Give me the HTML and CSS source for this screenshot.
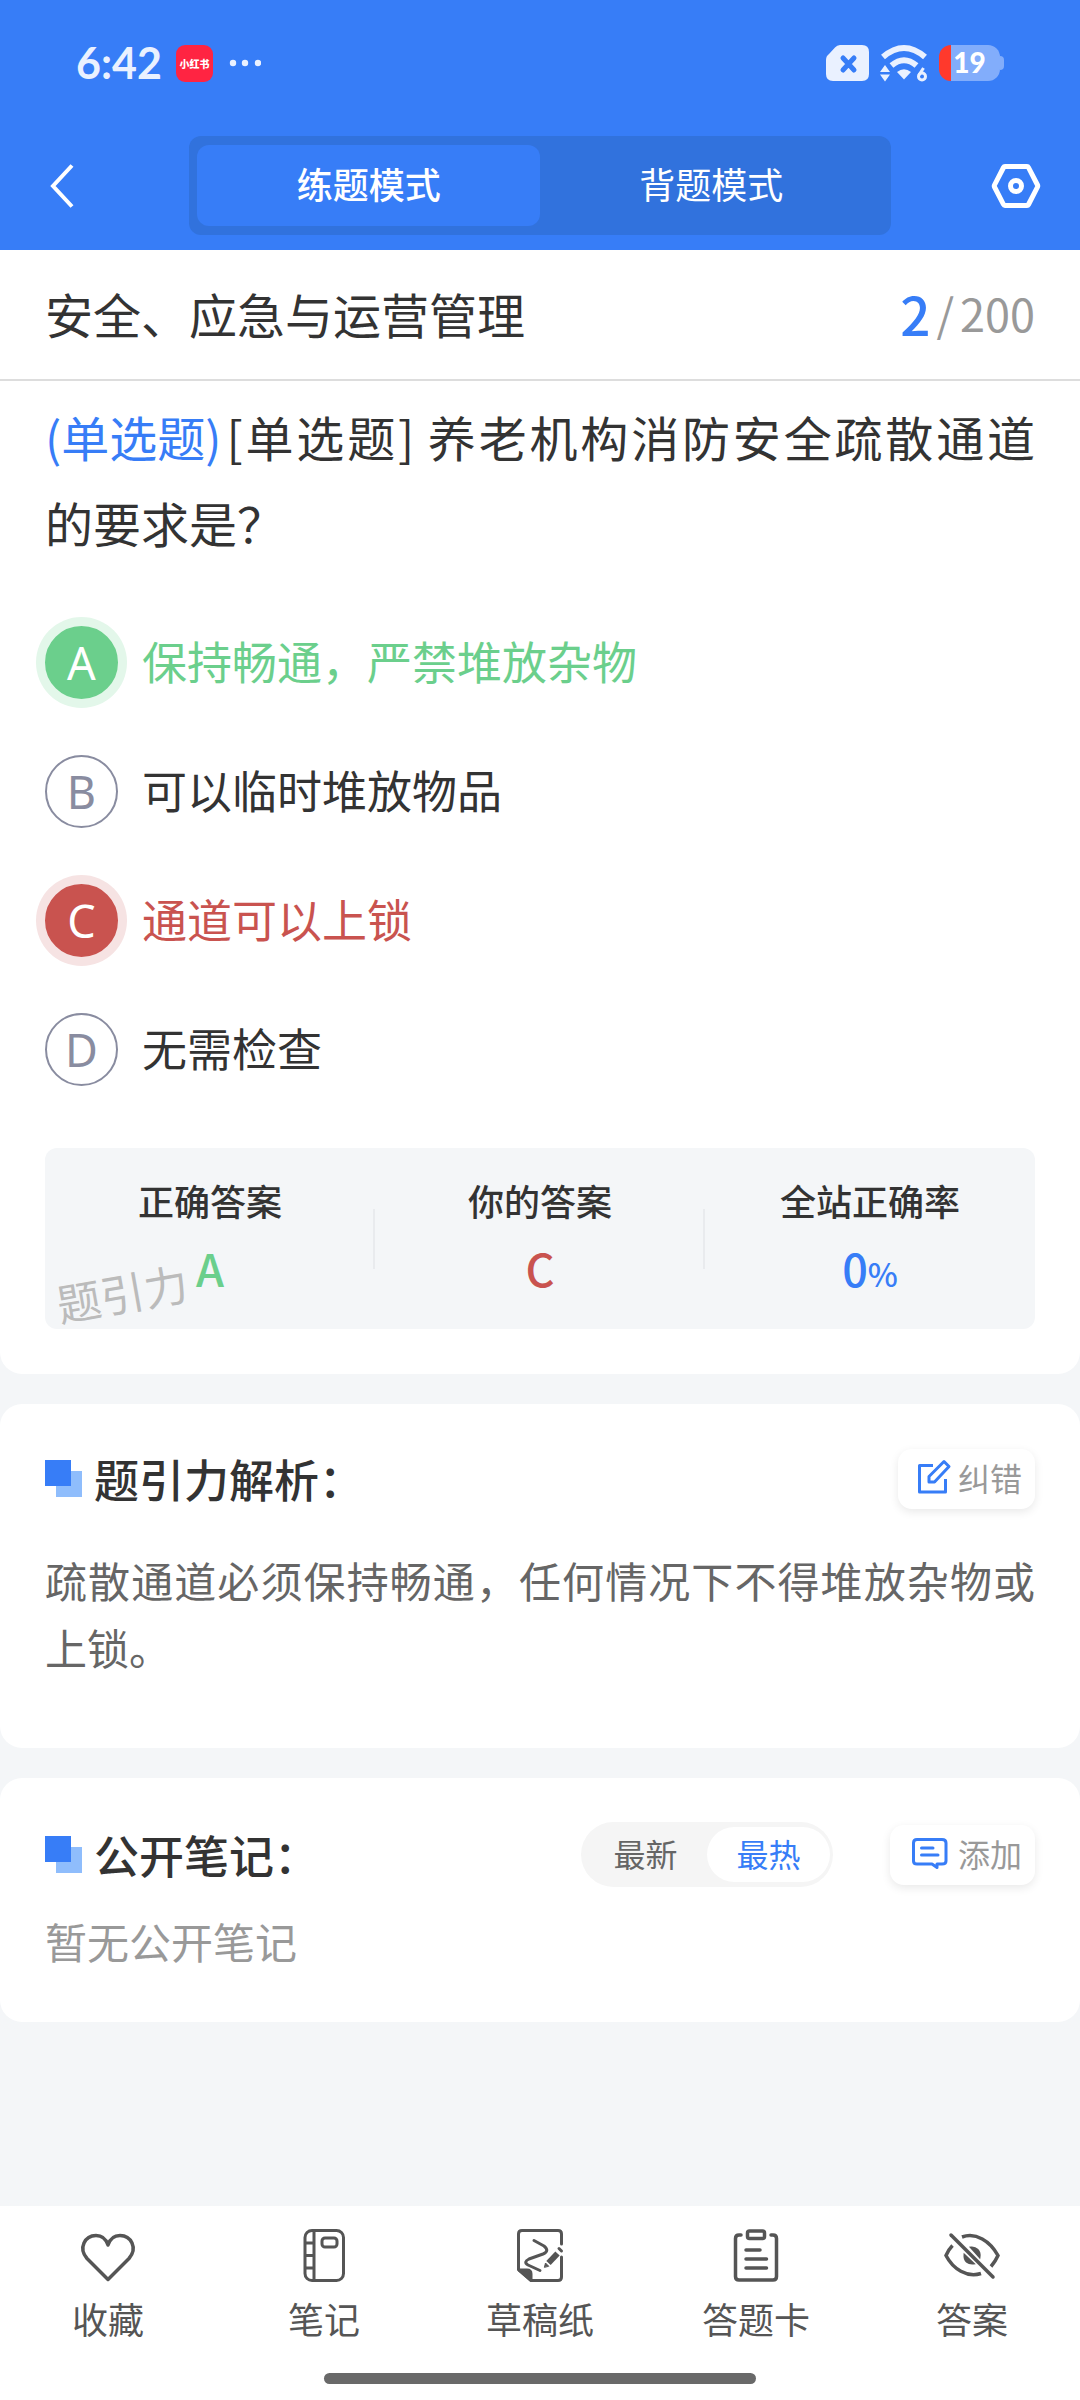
FILE: index.html
```html
<!DOCTYPE html>
<html lang="zh-CN">
<head>
    <meta charset="UTF-8">
    <meta name="viewport" content="width=device-width, initial-scale=1.0">
    <title>安全、应急与运营管理</title>
    <link rel="stylesheet" href="styles.css">
</head>
<body>
    <header class="header">
        <div class="status">
            <div class="status-left">
                <span class="status-time">6:42</span>
                <span class="status-app">小红书</span>
                <svg class="status-more" width="32" height="8" viewBox="0 0 32 8" fill="#eaf1ff">
                    <circle cx="4" cy="4" r="3.2"/>
                    <circle cx="16" cy="4" r="3.2"/>
                    <circle cx="29" cy="4" r="3.2"/>
                </svg>
            </div>
            <div class="status-right">
                <svg width="43" height="36" viewBox="0 0 43 36">
                    <path d="M14 0H36Q43 0 43 7V29Q43 36 36 36H7Q0 36 0 29V15Q0 11 3 9L9 2.500Q11 0 14 0Z" fill="#eaf1ff"/>
                    <path d="M17 13L28 25M28 13L17 25" stroke="#377df7" stroke-width="5" stroke-linecap="round"/>
                </svg>
                <svg width="48" height="38" viewBox="0 0 48 38" fill="none">
                    <path d="M3 13Q24 -5 45 13" stroke="#eaf1ff" stroke-width="6"/>
                    <path d="M11.500 21.500Q24 11 36.500 21.500" stroke="#eaf1ff" stroke-width="6"/>
                    <path d="M17 28Q24 22.500 31 28L24 35.500Z" fill="#eaf1ff"/>
                    <path d="M0 28L5 21L10 28ZM0 30.500H10L5 37.500Z" fill="#eaf1ff"/>
                    <path d="M43.500 24L39 31" stroke="#eaf1ff" stroke-width="3"/>
                    <circle cx="42" cy="32.500" r="3.500" stroke="#eaf1ff" stroke-width="3"/>
                </svg>
                <div class="battery">
                    <span class="battery-num">19</span>
                </div>
            </div>
        </div>
        <nav class="nav">
            <button class="nav-btn" type="button" aria-label="返回">
                <svg width="26" height="44" viewBox="0 0 26 44" fill="none" stroke="#fff" stroke-width="4">
                    <path d="M23 1.500L4 22L23 42.500"/>
                </svg>
            </button>
            <div class="mode">
                <button class="mode-item mode-active" type="button">练题模式</button>
                <button class="mode-item" type="button">背题模式</button>
            </div>
            <button class="nav-btn nav-set" type="button" aria-label="设置">
                <svg width="50" height="46" viewBox="0 0 50 46" fill="none" stroke="#fff" stroke-width="5" stroke-linejoin="round">
                    <path d="M14 3.500H36Q37 3.500 37.500 4.500L46.500 22Q47 23 46.500 24L37.500 41.500Q37 42.500 36 42.500H14Q13 42.500 12.500 41.500L3.500 24Q3 23 3.500 22L12.500 4.500Q13 3.500 14 3.500Z"/>
                    <circle cx="25" cy="23" r="5.500"/>
                </svg>
            </button>
        </nav>
    </header>

    <main class="main">
        <section class="card card-first">
            <div class="chapter">
                <h1 class="chapter-name">安全、应急与运营管理</h1>
                <div class="chapter-num"><b>2</b><span>/</span><span>200</span></div>
            </div>
            <div class="question">
                <p class="question-text"><span class="question-type">(单选题)</span>[单选题] 养老机构消防安全疏散通道的要求是？</p>
                <div class="options">
                    <label class="option option-right">
                        <input class="option-input" type="radio" name="answer">
                        <span class="option-key">A</span>
                        <span class="option-text">保持畅通，严禁堆放杂物</span>
                    </label>
                    <label class="option">
                        <input class="option-input" type="radio" name="answer">
                        <span class="option-key">B</span>
                        <span class="option-text">可以临时堆放物品</span>
                    </label>
                    <label class="option option-wrong">
                        <input class="option-input" type="radio" name="answer" checked>
                        <span class="option-key">C</span>
                        <span class="option-text">通道可以上锁</span>
                    </label>
                    <label class="option">
                        <input class="option-input" type="radio" name="answer">
                        <span class="option-key">D</span>
                        <span class="option-text">无需检查</span>
                    </label>
                </div>
                <div class="result">
                    <div class="result-item">
                        <span class="result-name">正确答案</span>
                        <span class="result-val green">A</span>
                    </div>
                    <div class="result-item">
                        <span class="result-name">你的答案</span>
                        <span class="result-val red">C</span>
                    </div>
                    <div class="result-item">
                        <span class="result-name">全站正确率</span>
                        <span class="result-val blue">0<small>%</small></span>
                    </div>
                    <span class="watermark">题引力</span>
                </div>
            </div>
        </section>

        <section class="card analysis">
            <div class="card-head">
                <h2 class="card-title">题引力解析：</h2>
                <button class="card-btn" type="button">
                    <svg width="36" height="36" viewBox="0 0 36 36" fill="none" stroke="#377df7" stroke-width="3" stroke-linejoin="round">
                        <path d="M17 6.500H3.500V33H29.500V20"/>
                        <path d="M28 2.500L33 7.500L18.500 23H13V17.500Z"/>
                    </svg>
                    纠错
                </button>
            </div>
            <p class="analysis-text">疏散通道必须保持畅通，任何情况下不得堆放杂物或上锁。</p>
        </section>

        <section class="card notes">
            <div class="card-head">
                <h2 class="card-title">公开笔记：</h2>
                <div class="sort">
                    <button class="sort-item" type="button">最新</button>
                    <button class="sort-item sort-active" type="button">最热</button>
                </div>
                <button class="card-btn" type="button">
                    <svg width="44" height="36" viewBox="-3 0 44 36" fill="none" stroke="#377df7" stroke-width="3" stroke-linejoin="round" stroke-linecap="round">
                        <path d="M6 4.500H31Q35 4.500 35 8V26Q35 29 31 29H26V32.500L21 29H6Q2.500 29 2.500 26V8Q2.500 4.500 6 4.500Z"/>
                        <path d="M10.500 13H22M10.500 20H27"/>
                    </svg>
                    添加
                </button>
            </div>
            <p class="notes-empty">暂无公开笔记</p>
        </section>
    </main>

    <footer class="footer">
        <nav class="tabs">
            <a class="tab" href="#">
                <svg width="60" height="60" viewBox="0 0 60 60" fill="none" stroke="#555" stroke-width="3.500" stroke-linejoin="round">
                    <path d="M30 54.500L9 33.500C0 23 7 10.500 18 10.500C24 10.500 28 14 30 20C32 14 36 10.500 42 10.500C53 10.500 60 23 51 33.500Z"/>
                </svg>
                收藏
            </a>
            <a class="tab" href="#">
                <svg width="60" height="60" viewBox="0 0 60 60" fill="none" stroke="#555" stroke-width="3">
                    <rect x="11" y="5.500" width="38.500" height="50" rx="7"/>
                    <path d="M20 5V56M11 18H20M11 30.500H20M11 43H20"/>
                    <rect x="28" y="13" width="15" height="9" rx="3"/>
                </svg>
                笔记
            </a>
            <a class="tab" href="#">
                <svg width="60" height="60" viewBox="0 0 60 60" fill="none" stroke="#555" stroke-width="3" stroke-linecap="round" stroke-linejoin="round">
                    <path d="M51.500 19V9Q51.500 5.500 48 5.500H12Q8.500 5.500 8.500 9V44.500L21 55.500H48Q51.500 55.500 51.500 52V32"/>
                    <path d="M9 45H17Q21 45 21 49V55Z" fill="#555"/>
                    <path d="M24 15.500L34 21Q40 26 33 29L19 34Q13 37 18 40L30 45.500"/>
                    <path d="M38.500 38L47.500 28.500" stroke-width="6" stroke-linecap="butt"/>
                    <path d="M34.500 42L35.500 38L38.500 41Z" fill="#555" stroke-width="1"/>
                    <path d="M49 23.500L51.500 26"/>
                </svg>
                草稿纸
            </a>
            <a class="tab" href="#">
                <svg width="60" height="60" viewBox="0 0 60 60" fill="none" stroke="#555" stroke-width="3.500" stroke-linecap="round">
                    <path d="M15 10H13Q9.500 10 9.500 13.500V51.500Q9.500 55 13 55H47Q50.500 55 50.500 51.500V13.500Q50.500 10 47 10H45"/>
                    <rect x="21.500" y="6" width="17" height="7.500" rx="2"/>
                    <path d="M20 25H34M20 34H40.500M20 43H40.500"/>
                </svg>
                答题卡
            </a>
            <a class="tab" href="#">
                <svg width="60" height="60" viewBox="0 0 60 60" fill="none" stroke="#555" stroke-width="3.500" stroke-linecap="round">
                    <path d="M20 12C34 7 48 16 56 30.500C54 35 52 38 49 41.500M39 48.500C25 53 11 44 4 30.500C6 26 8 23 10.500 20.500" stroke-linecap="butt"/>
                    <path d="M29 22.500C34 22 38.500 26 37.500 32ZM22.500 30C22 36 26 39 31.500 38.500Z" fill="#555" stroke-width="2"/>
                    <path d="M9 10L51 52"/>
                </svg>
                答案
            </a>
        </nav>
        <div class="home-bar"></div>
    </footer>
</body>
</html>
```
FILE: styles.css
```css
*{
    margin: 0;
    padding: 0;
    box-sizing: border-box;
}
body{
    display: flex;
    flex-direction: column;
    min-height: 100vh;
    background-color: #f4f6f8;
    color: #333;
    font-family: "Noto Sans CJK SC", "Noto Sans", sans-serif;
}
button{
    border: none;
    background: none;
    font-family: inherit;
    cursor: pointer;
}
a{
    text-decoration: none;
}
svg{
    display: block;
    flex: none;
}

/* 顶部 */
.header{
    background-color: #377df7;
}
.status{
    display: flex;
    justify-content: space-between;
    align-items: center;
    height: 126px;
    padding: 0 76px;
}
.status-left,
.status-right{
    display: flex;
    align-items: center;
}
.status-time{
    margin-right: 14px;
    color: #eaf1ff;
    font: bold 43px/50px Lato, sans-serif;
}
.status-app{
    width: 37px;
    height: 37px;
    margin-right: 16px;
    border-radius: 9px;
    background-color: #ff2442;
    color: #fff;
    font-size: 10px;
    font-weight: 900;
    line-height: 37px;
    text-align: center;
}
.status-right{
    gap: 11px;
}
.battery{
    position: relative;
    width: 61px;
    height: 36px;
    margin-right: 4px;
    border-radius: 12px;
    background: linear-gradient(90deg, #ff392c 12px, #82adfb 12px);
    text-align: center;
}
.battery::after{
    content: "";
    position: absolute;
    top: 11px;
    right: -4px;
    width: 4px;
    height: 14px;
    border-radius: 0 4px 4px 0;
    background-color: #82adfb;
}
.battery-num{
    color: #fff;
    font: 900 28px/35px Lato, sans-serif;
}
.nav{
    display: flex;
    justify-content: space-between;
    align-items: center;
    padding: 10px 39px 15px;
}
.nav-btn{
    display: flex;
    width: 50px;
    padding-left: 10px;
}
.nav-set{
    padding-left: 0;
}
.mode{
    display: flex;
    width: 70%;
    padding: 9px 8px;
    border-radius: 12px;
    background-color: #3172dd;
}
.mode-item{
    flex: 1;
    height: 81px;
    padding-bottom: 5px;
    border-radius: 12px;
    color: #fff;
    font-size: 36px;
}
.mode-active{
    background-color: #377df7;
    font-weight: 500;
}

/* 题目 */
.main{
    flex: 1;
}
.card{
    margin-bottom: 30px;
    padding: 0 45px;
    border-radius: 22px;
    background-color: #fff;
}
.card-first{
    padding: 0;
    border-radius: 0 0 22px 22px;
}
.chapter{
    display: flex;
    justify-content: space-between;
    align-items: center;
    height: 131px;
    padding: 0 45px 4px;
    border-bottom: 2px solid #ddd;
}
.chapter-name{
    font-size: 48px;
    font-weight: 400;
}
.chapter-num{
    display: flex;
    align-items: center;
    gap: 6px;
    color: #999;
    font-size: 45px;
}
.chapter-num b{
    color: #377df7;
    font-size: 53px;
    font-weight: 500;
}
.question{
    padding: 12px 45px 45px;
}
.question-text{
    font-size: 48px;
    line-height: 86px;
    text-align: justify;
}
.question-type{
    display: inline-block;
    margin-right: 5px;
    color: #377df7;
}
.options{
    padding: 33px 0 34px;
}
.option{
    display: flex;
    align-items: center;
    gap: 24px;
    height: 129px;
    font-size: 45px;
    cursor: pointer;
}
.option-input{
    position: absolute;
    opacity: 0;
}
.option-key{
    width: 73px;
    height: 73px;
    border: 2px solid #898ca0;
    border-radius: 50%;
    color: #898ca0;
    font-family: "Noto Sans", sans-serif;
    line-height: 69px;
    text-align: center;
}
.option-text{
    padding-bottom: 5px;
}
.option-right,
.green{
    color: #6bcf8c;
}
.option-wrong,
.red{
    color: #c9534f;
}
.blue{
    color: #377df7;
}
.option-right .option-key{
    border-color: #6bcf8c;
    background-color: #6bcf8c;
    box-shadow: 0 0 0 9px #e3f7ea;
    color: #fff;
}
.option-wrong .option-key{
    border-color: #c9534f;
    background-color: #c9534f;
    box-shadow: 0 0 0 9px #f6e3e3;
    color: #fff;
}
.result{
    position: relative;
    display: flex;
    align-items: center;
    height: 181px;
    border-radius: 12px;
    background-color: #f4f6f8;
}
.result-item{
    display: flex;
    flex: 1;
    flex-direction: column;
    align-items: center;
    padding-bottom: 9px;
    font-weight: 500;
}
.result-item:nth-child(-n+2){
    background: linear-gradient(#e9ebee, #e9ebee) right center / 2px 60px no-repeat;
}
.result-name{
    font-size: 36px;
    line-height: 68px;
}
.result-val{
    height: 68px;
    font-size: 45px;
    line-height: 68px;
}
.result-val small{
    font-size: 32px;
    line-height: 1;
}
.watermark{
    position: absolute;
    left: 11px;
    bottom: 4px;
    color: #bbb;
    font-size: 44px;
    line-height: 65px;
    transform: rotate(-10deg);
}

/* 解析、笔记 */
.card-head{
    display: flex;
    align-items: center;
}
.card-title{
    flex: 1;
    display: flex;
    align-items: center;
    gap: 12px;
    font-size: 45px;
    font-weight: 500;
}
.card-title::before{
    content: "";
    width: 37px;
    height: 37px;
    background:
        linear-gradient(#377df7, #377df7) 0 0 / 26px 26px no-repeat,
        linear-gradient(#8fbdfc, #8fbdfc) 100% 100% / 26px 26px no-repeat;
}
.card-btn{
    display: flex;
    align-items: center;
    gap: 6px;
    height: 60px;
    padding: 0 13px 3px 18px;
    border-radius: 14px;
    box-shadow: 0 3px 10px rgba(0, 0, 0, .09);
    color: #999;
    font-size: 32px;
}
.analysis{
    padding-top: 42px;
    padding-bottom: 68px;
}
.analysis-text{
    margin-top: 35px;
    color: #666;
    font-size: 42px;
    line-height: 67px;
    text-align: justify;
}
.notes{
    padding-top: 44px;
    padding-bottom: 48px;
}
.sort{
    display: flex;
    margin-right: 57px;
    padding: 5px 3px;
    border-radius: 33px;
    background-color: #f5f5f5;
}
.sort-item{
    width: 123px;
    height: 55px;
    padding-bottom: 4px;
    border-radius: 28px;
    color: #666;
    font-size: 32px;
}
.sort-active{
    background-color: #fff;
    color: #377df7;
}
.notes-empty{
    margin-top: 20px;
    color: #999;
    font-size: 42px;
    line-height: 67px;
}

/* 底部 */
.footer{
    padding: 19px 0 16px;
    background-color: #fff;
}
.tabs{
    display: flex;
}
.tab{
    display: flex;
    flex: 1;
    flex-direction: column;
    align-items: center;
    gap: 6px;
    color: #555;
    font-size: 36px;
    line-height: 54px;
}
.home-bar{
    width: 40%;
    height: 11px;
    margin: 28px auto 0;
    border-radius: 6px;
    background-color: #696969;
}
```
